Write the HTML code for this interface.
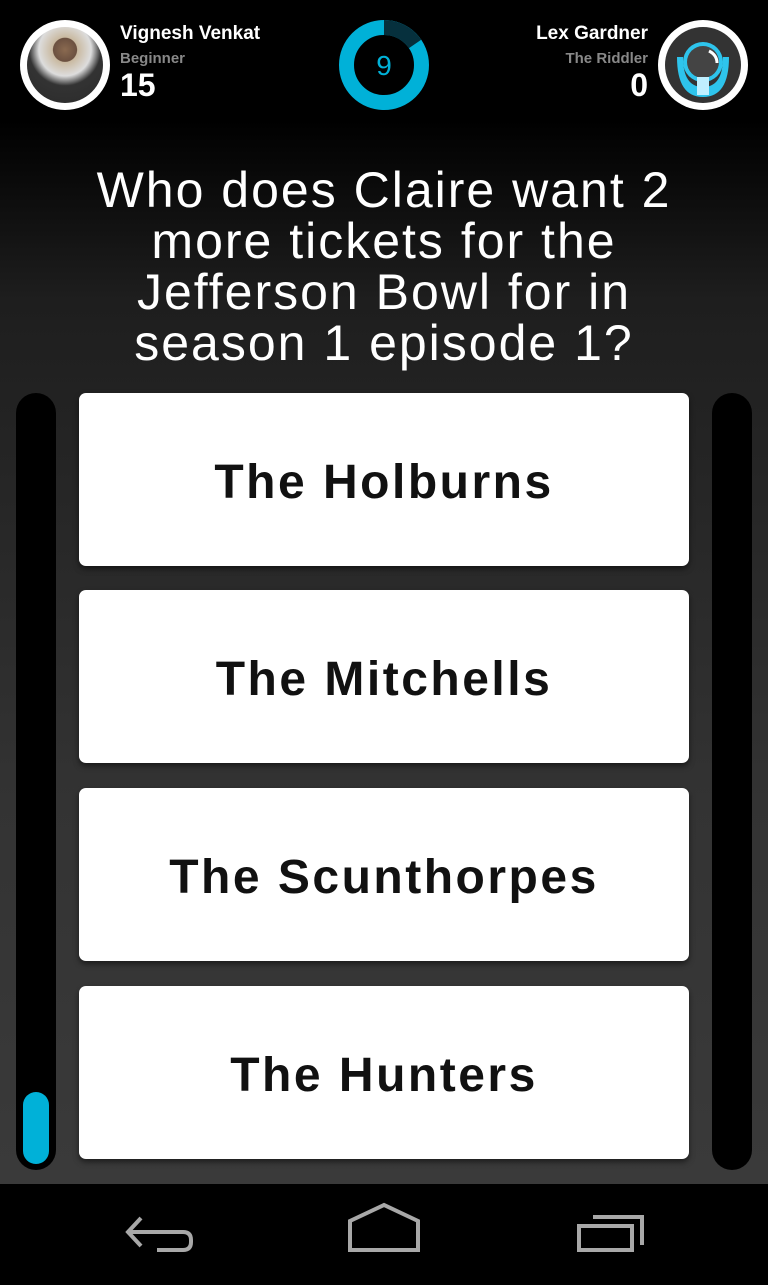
<!DOCTYPE html>
<html><head><style>
*{margin:0;padding:0;box-sizing:border-box}
body{width:768px;height:1280px;overflow:hidden;font-family:"Liberation Sans",sans-serif;background:#000;position:relative}
.bg{position:absolute;left:0;top:0;width:768px;height:1184px;background:linear-gradient(#000 0px,#000 120px,#1e1e1e 300px,#333 800px,#3a3a3a 1184px)}
.av{position:absolute;top:20px;width:90px;height:90px;border-radius:50%;background:#fff}
.av .in{position:absolute;left:7px;top:7px;width:76px;height:76px;border-radius:50%;overflow:hidden}
.name{position:absolute;color:#fff;font-size:19px;font-weight:bold;top:23px}
.sub{position:absolute;color:#888;font-size:15px;font-weight:bold;top:50px}
.sc{position:absolute;color:#fff;font-size:32px;font-weight:bold;top:67px}
.q{position:absolute;left:0;width:768px;top:165px;color:#fff;font-size:50px;line-height:51px;text-align:center;letter-spacing:2px}
.bar{position:absolute;top:393px;width:40px;height:777px;background:#000;border-radius:20px}
.card{position:absolute;left:79px;width:610px;height:173px;padding-top:6px;background:#fff;border-radius:7px;box-shadow:0 3px 6px rgba(0,0,0,.5);display:flex;align-items:center;justify-content:center;font-size:48px;font-weight:bold;color:#111;letter-spacing:2.5px}
.nav{position:absolute;top:1184px;left:0;width:768px;height:96px;background:#000}
</style></head><body>
<div class="bg"></div>
<div class="av" style="left:20px"><div class="in" style="background:radial-gradient(circle at 50% 30%,#8a6a50 0,#6b5040 18%,#c9b9a0 19%,#ddd 40%,#333 55%,#2a2a2a 100%)"></div></div>
<div class="name" style="left:120px">Vignesh Venkat</div>
<div class="sub" style="left:120px">Beginner</div>
<div class="sc" style="left:120px">15</div>
<svg style="position:absolute;left:339px;top:20px" width="90" height="90" viewBox="0 0 90 90">
<circle cx="45" cy="45" r="37.5" fill="none" stroke="#00b1d8" stroke-width="15"/>
<path d="M45 7.5 A37.5 37.5 0 0 1 76 24" fill="none" stroke="#06303d" stroke-width="15"/>
<text x="45" y="55" text-anchor="middle" font-family="Liberation Sans" font-size="28" fill="#00b1d8">9</text>
</svg>
<div class="name" style="right:120px">Lex Gardner</div>
<div class="sub" style="right:120px">The Riddler</div>
<div class="sc" style="right:120px">0</div>
<div class="av" style="left:658px"><div class="in" style="background:#333">
<svg width="76" height="76" viewBox="0 0 76 76"><path d="M12 30 Q12 70 38 70 Q64 70 64 30 L58 30 Q58 60 38 60 Q18 60 18 30Z" fill="#2ec4ec"/><circle cx="38" cy="35" r="20" fill="#2ec4ec"/><circle cx="38" cy="35" r="16" fill="#444"/><path d="M44 24 Q52 28 52 36" stroke="#fff" stroke-width="3" fill="none"/><rect x="32" y="50" width="12" height="18" fill="#bfefff"/></svg></div></div>
<div class="q">Who does Claire want 2<br>more tickets for the<br>Jefferson Bowl for in<br>season 1 episode 1?</div>
<div class="bar" style="left:16px"><div style="position:absolute;left:7px;top:699px;width:26px;height:72px;border-radius:13px;background:#00b1d8"></div></div>
<div class="bar" style="left:712px"></div>
<div class="card" style="top:393px">The Holburns</div>
<div class="card" style="top:590px">The Mitchells</div>
<div class="card" style="top:788px">The Scunthorpes</div>
<div class="card" style="top:986px">The Hunters</div>
<div class="nav">
<svg width="768" height="96" viewBox="0 0 768 96" fill="none" stroke="#a8a8a8" stroke-width="4">
<path d="M141 34 L128 48 L141 62 M128 48 H183 Q191 48 191 56 V58 Q191 66 183 66 H157"/>
<path d="M350 66 V37 L384 21 L418 37 V66 Z"/>
<path d="M579 42 H632 V66 H579 Z M593 33 H642 V61"/>
</svg>
</div>
</body></html>
